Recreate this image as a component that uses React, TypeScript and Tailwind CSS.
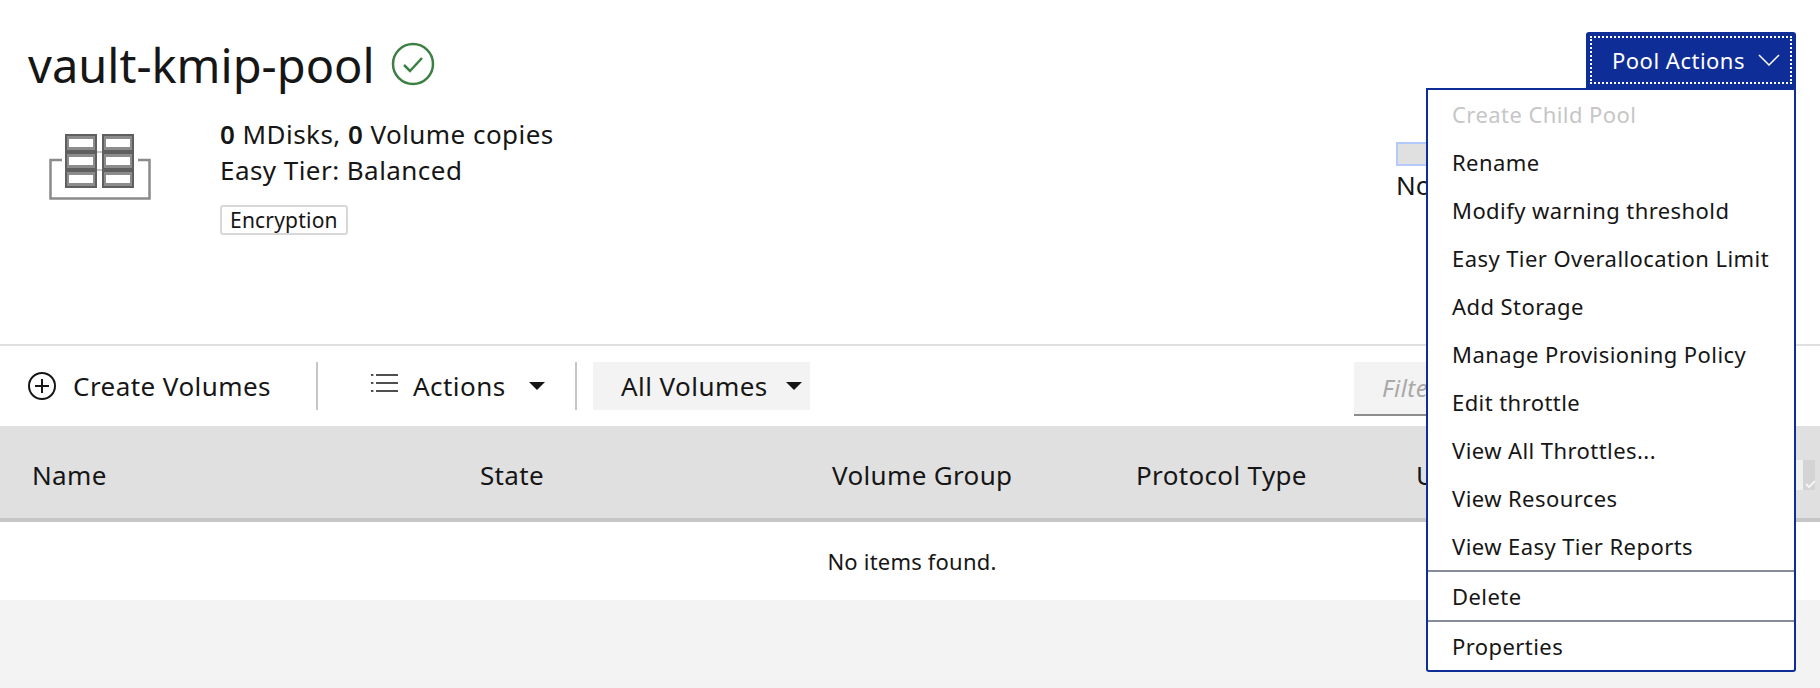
import React from 'react';

const FONT = 'font-["Noto_Sans",sans-serif]';

const menuItems = [
  'Rename',
  'Modify warning threshold',
  'Easy Tier Overallocation Limit',
  'Add Storage',
  'Manage Provisioning Policy',
  'Edit throttle',
  'View All Throttles...',
  'View Resources',
  'View Easy Tier Reports',
];

const PoolIcon = () => (
  <svg width="104" height="70" viewBox="0 0 104 70" fill="none" className="shrink-0">
    <path d="M14 29H2.5v38.500h99V29H90" stroke="#8a8a8a" strokeWidth="2.5" />
    {[17, 54].map((x) => (
      <g key={x}>
        <rect x={x} y="3" width="32" height="54" fill="#5f5f5f" />
        {[8, 26, 44].map((y) => (
          <g key={y}>
            <rect x={x + 2} y={y - 3} width="28" height="14" fill="#8c8c8c" />
            <rect x={x + 4} y={y} width="24" height="8" fill="#fff" />
          </g>
        ))}
      </g>
    ))}
    <path d="M49 21h5M49 39h5" stroke="#c8c8c8" strokeWidth="2" />
  </svg>
);

const Caret = () => (
  <svg width="16" height="8" viewBox="0 0 16 8" className="shrink-0">
    <path d="M0 0h16L8 8z" fill="#161616" />
  </svg>
);

const PoolMenu = () => (
  <div className="absolute right-[24px] top-[32px] w-[370px]">
    <div className="ml-auto flex h-[56px] w-[210px] rounded-t-[3px] bg-[#0f2d96] p-[4px]">
      <div className="flex flex-1 items-center justify-between border-2 border-dotted border-white pl-[20px] pr-[10px] text-[22px] tracking-[0.5px] text-white">
        <span>Pool Actions</span>
        <svg width="22" height="12" viewBox="0 0 22 12" fill="none">
          <path d="M1 1l10 10L21 1" stroke="#fff" strokeWidth="1.5" />
        </svg>
      </div>
    </div>
    <div className="rounded-b-[3px] border-2 border-[#0f2d96] bg-white text-[22px] tracking-[0.43px] text-[#161616]">
      <div>
        <div className="flex h-[48px] items-center pl-[24px] text-[#c6c6c6]">Create Child Pool</div>
        {menuItems.map((item) => (
          <div key={item} className="flex h-[48px] items-center pl-[24px]">{item}</div>
        ))}
      </div>
      <div className="flex h-[50px] items-center border-t-2 border-[#868b9a] pl-[24px]">Delete</div>
      <div className="flex h-[50px] items-center border-t-2 border-[#868b9a] pl-[24px]">Properties</div>
    </div>
  </div>
);

export default function App() {
  return (
    <div className={`relative h-[688px] w-[1820px] overflow-hidden bg-[#f3f3f3] text-[#161616] ${FONT}`}>
      <div className="h-[346px] border-b-2 border-[#e0e0e0] bg-white pl-[28px]">
        <div className="flex items-start gap-[16px] pt-[35px]">
          <h1 className="pt-[1px] text-[47px] leading-[58px]">vault-kmip-pool</h1>
          <svg width="44" height="44" viewBox="0 0 44 44" fill="none" className="mt-[7px]">
            <circle cx="22" cy="22" r="20" stroke="#3c8043" strokeWidth="2.5" />
            <path d="M13 23l6 6 12-13" stroke="#3c8043" strokeWidth="2.5" />
          </svg>
        </div>
        <div className="flex pt-[22px]">
          <div className="w-[192px] pl-[20px] pt-[15px]">
            <PoolIcon />
          </div>
          <div className="w-[1176px] text-[26px] leading-[36px] tracking-[0.45px]">
            <p><b className="font-semibold">0</b> MDisks, <b className="font-semibold">0</b> Volume copies</p>
            <p>Easy Tier: Balanced</p>
            <span className="mt-[17px] inline-block rounded-[3px] border-2 border-[#d8d8d8] px-[8px] text-[21px] leading-[26px] tracking-[0.2px]">Encryption</span>
          </div>
          <div className="pt-[26px]">
            <div className="h-[24px] w-[60px] border-2 border-[#b4caff] bg-[#e0e0e0]" />
            <p className="text-[26px] leading-[38px]">No</p>
          </div>
        </div>
      </div>

      <div className="flex h-[80px] items-start bg-white pt-[16px] text-[26px] tracking-[0.45px]">
        <div className="flex h-[48px] w-[318px] items-center gap-[17px] border-r-2 border-[#c6c6c6] pl-[28px]">
          <svg width="28" height="28" viewBox="0 0 28 28" fill="none" stroke="#161616" strokeWidth="2">
            <circle cx="14" cy="14" r="13" />
            <path d="M14 7v14M7 14h14" />
          </svg>
          <span>Create Volumes</span>
        </div>
        <div className="flex h-[48px] w-[259px] items-center border-r-2 border-[#c6c6c6] pl-[53px]">
          <svg width="27" height="20" viewBox="0 0 27 20" fill="none" stroke="#161616" strokeWidth="1.6" className="mb-[6px]">
            <path d="M5 2h22M5 10h22M5 18h22M0 2h2.4M0 10h2.4M0 18h2.4" />
          </svg>
          <span className="ml-[15px]">Actions</span>
          <span className="ml-[23px]"><Caret /></span>
        </div>
        <div className="ml-[16px] flex h-[48px] w-[217px] items-center bg-[#f3f3f3] pl-[28px]">
          <span>All Volumes</span>
          <span className="ml-[18px]"><Caret /></span>
        </div>
        <div className="ml-[544px] flex h-[54px] w-[300px] items-center border-b-2 border-[#8d8d8d] bg-[#f3f3f3] pl-[28px] text-[24px] italic tracking-[0.5px] text-[#a8a8a8]">Filter</div>
      </div>

      <div className="flex h-[96px] items-center border-b-4 border-[#c6c6c6] bg-[#e0e0e0] pt-[7px] text-[26px] tracking-[0.35px]">
        <div className="w-[480px] pl-[32px]">Name</div>
        <div className="w-[352px]">State</div>
        <div className="w-[304px]">Volume Group</div>
        <div className="w-[280px]">Protocol Type</div>
        <div>UID</div>
        <svg width="24" height="32" viewBox="0 0 24 32" className="ml-auto shrink-0">
          <rect x="0" y="0" width="7" height="30" fill="#f0f0f0" />
          <rect x="7" y="0" width="12" height="30" fill="#d4d4d4" />
          <path d="M10 24l3 3 6-6" stroke="#f4f4f4" strokeWidth="2" fill="none" />
        </svg>
      </div>
      <div className="flex h-[78px] items-center justify-center bg-white pl-[4px] text-[22px] tracking-[0.2px]">No items found.</div>

      <PoolMenu />
    </div>
  );
}
